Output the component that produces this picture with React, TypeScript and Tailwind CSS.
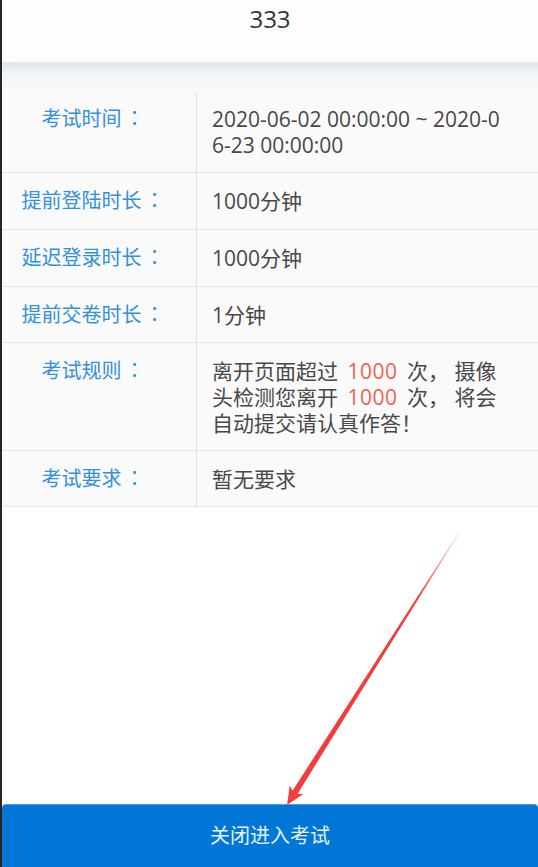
import type { ReactNode } from 'react';

type Row = {
  label: string;
  value: ReactNode;
  pad: string;
};

const Num = ({ children }: { children: ReactNode }) => (
  <span className="mx-[4px] tracking-[0.5px] text-[#f5604f]">{children}</span>
);

const rows: Row[] = [
  {
    label: '考试时间',
    pad: 'py-[14px]',
    value: (
      <>
        2020-06-02 00:00:00 ~ 2020-0
        <br />
        6-23 00:00:00
      </>
    ),
  },
  { label: '提前登陆时长', pad: 'py-[15px]', value: '1000分钟' },
  { label: '延迟登录时长', pad: 'py-[15px]', value: '1000分钟' },
  { label: '提前交卷时长', pad: 'pt-[15px] pb-[14px]', value: '1分钟' },
  {
    label: '考试规则',
    pad: 'pt-[15px] pb-[14px]',
    value: (
      <>
        离开页面超过 <Num>1000</Num> 次，&nbsp;摄像
        <br />
        头检测您离开 <Num>1000</Num> 次，&nbsp;将会
        <br />
        自动提交请认真作答！
      </>
    ),
  },
  { label: '考试要求', pad: 'pt-[15px] pb-[14px]', value: '暂无要求' },
];

function Arrow() {
  return (
    <svg
      className="pointer-events-none absolute inset-0"
      width="538"
      height="867"
      viewBox="0 0 538 867"
    >
      <defs>
        <linearGradient id="fade" x1="457" y1="533" x2="285" y2="805" gradientUnits="userSpaceOnUse">
          <stop offset="0" stopColor="#f53c3c" stopOpacity="0.15" />
          <stop offset="0.25" stopColor="#f53c3c" stopOpacity="1" />
          <stop offset="1" stopColor="#f53c3c" stopOpacity="1" />
        </linearGradient>
      </defs>
      <polygon
        fill="url(#fade)"
        points="456.4,533.1 290.5,790.7 287.8,785.5 285,805 301.4,794.1 295.5,793.9 457,533.5"
      />
    </svg>
  );
}

export default function App() {
  return (
    <div
      className="relative flex h-screen flex-col overflow-hidden border-l-2 border-[#262626] bg-white"
      style={{ fontFamily: '"Open Sans", "Noto Sans CJK SC", sans-serif' }}
    >
      {/* Title */}
      <header className="h-[62px] shrink-0 bg-[#fdfdfd] pt-[3px] text-center text-[24px] leading-[32px] text-[#333]">
        333
      </header>

      {/* Info table */}
      <section className="shrink-0 bg-[#fafafa]">
        <div className="h-[30px] bg-gradient-to-b from-[#dfe5ec] via-[#f3f5f7] via-40% to-[#fafafa]" />
        <div>
          {rows.map((row) => (
            <div key={row.label} className="flex border-b border-[#e5e5e5]">
              <div
                className={`w-[195px] shrink-0 border-r border-[#e2e2e2] pr-[12px] text-center text-[20px] leading-[26px] text-[#3190e0] ${row.pad}`}
              >
                {row.label}
                <span
                  className="ml-[3px] leading-none"
                  style={{ fontFamily: '"Noto Sans CJK TC", sans-serif' }}
                >
                  ：
                </span>
              </div>
              <div
                className={`flex-1 whitespace-nowrap pl-[15px] text-[21px] leading-[26px] text-[#484848] ${row.pad}`}
              >
                {row.value}
              </div>
            </div>
          ))}
        </div>
      </section>

      <div className="flex-1" />

      {/* Close button */}
      <button className="h-[63px] shrink-0 rounded-t-[4px] border-t border-[#4a9fe6] bg-[#0077d6] text-[20px] text-[#e6f1fb]">
        关闭进入考试
      </button>

      <Arrow />
    </div>
  );
}
